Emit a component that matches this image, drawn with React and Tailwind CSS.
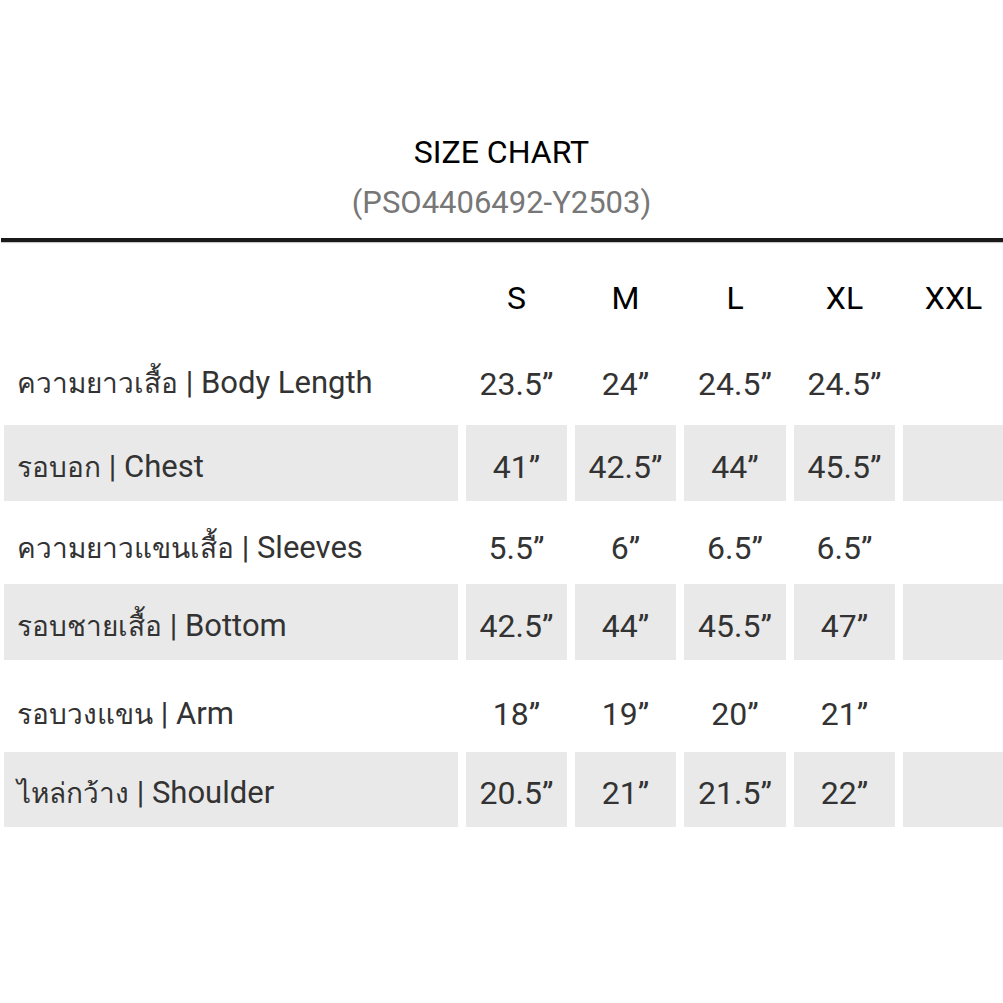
const sizes = ["S", "M", "L", "XL", "XXL"];

const rows = [
  { th: "ความยาวเสื้อ", en: "Body Length", values: ["23.5”", "24”", "24.5”", "24.5”", ""], shade: false, h: "h-[83px]", pad: "pt-[0px]" },
  { th: "รอบอก", en: "Chest", values: ["41”", "42.5”", "44”", "45.5”", ""], shade: true, h: "h-[76px]", pad: "pt-[8px]" },
  { th: "ความยาวแขนเสื้อ", en: "Sleeves", values: ["5.5”", "6”", "6.5”", "6.5”", ""], shade: false, h: "h-[83px]", pad: "pt-[11px]" },
  { th: "รอบชายเสื้อ", en: "Bottom", values: ["42.5”", "44”", "45.5”", "47”", ""], shade: true, h: "h-[76px]", pad: "pt-[8px]" },
  { th: "รอบวงแขน", en: "Arm", values: ["18”", "19”", "20”", "21”", ""], shade: false, h: "h-[92px]", pad: "pt-[16px]" },
  { th: "ไหล่กว้าง", en: "Shoulder", values: ["20.5”", "21”", "21.5”", "22”", ""], shade: true, h: "h-[75px]", pad: "pt-[7px]" },
];

const grid = "grid grid-cols-[454px_101px_101px_102px_101px_101px] gap-x-[8px] pl-[4px]";

export default function App() {
  return (
    <div className="w-[1003px] h-[1003px] bg-white font-['Roboto','Noto_Sans',sans-serif] pt-[132px]">
      <div className="text-center text-[32px] leading-[40px] text-black">SIZE CHART</div>
      <div className="text-center text-[31px] leading-[40px] mt-[11px] text-[#777]">(PSO4406492-Y2503)</div>
      <div className="mt-[15px] ml-[1px] h-[4px] bg-[#1a1a1a] shadow-[0_1px_1px_rgba(0,0,0,0.25)]" />

      <div className={`${grid} h-[100px] pt-[12px] items-center text-[32px] text-black`}>
        <div />
        {sizes.map((s) => (
          <div key={s} className="text-center">{s}</div>
        ))}
      </div>

      {rows.map((r) => (
        <div key={r.en} className={`${grid} ${r.h} text-[32px] text-[#333]`}>
          <div className={`flex items-center pl-[13px] ${r.pad} ${r.shade ? "bg-[#e9e9e9]" : ""}`}>
            <span className="leading-[40px] text-[31px] whitespace-pre">
              <span className="text-[28px]">{r.th}</span> | {r.en}
            </span>
          </div>
          {r.values.map((v, i) => (
            <div key={i} className={`flex items-center justify-center ${r.pad} ${r.shade ? "bg-[#e9e9e9]" : ""}`}>
              <span className="leading-[40px]">{v}</span>
            </div>
          ))}
        </div>
      ))}
    </div>
  );
}
